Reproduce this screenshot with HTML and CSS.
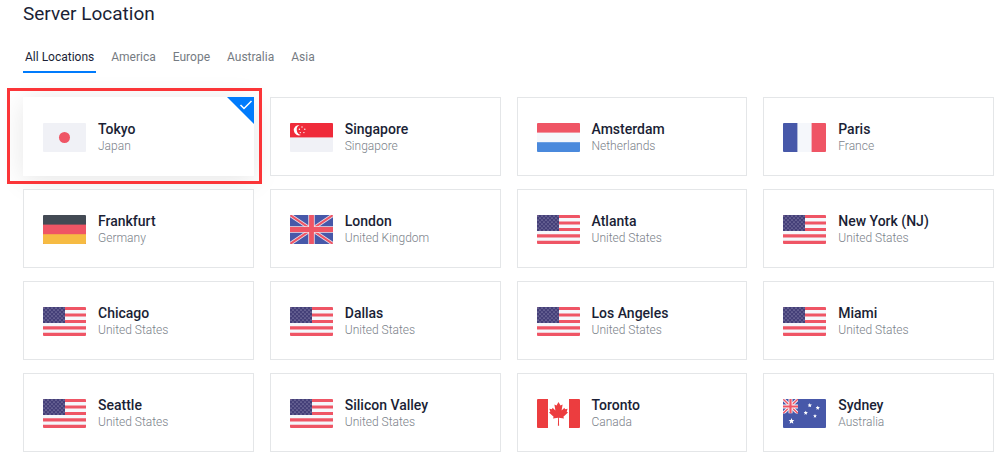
FILE: index.html
```html
<!DOCTYPE html>
<html lang="en">
<head>
<meta charset="UTF-8">
<meta name="viewport" content="width=device-width, initial-scale=1.0">
<link rel="stylesheet" href="styles.css">
<title>Server Location</title>
</head>
<body>
  <!-- Flags -->
  <svg class="sprite" aria-hidden="true">
    <symbol id="jp" viewBox="0 0 43 29">
      <rect width="43" height="29" fill="#f0f1f6"/>
      <circle cx="21.5" cy="14.5" r="5.5" fill="#ef5565"/>
    </symbol>
    <symbol id="sg" viewBox="0 0 43 29">
      <rect width="43" height="29" fill="#f0f1f6"/>
      <rect width="43" height="14.4" fill="#ef2b3a"/>
      <path d="M9.5 2 A5.2 5.2 0 1 0 11 12 A5.4 5.4 0 0 1 9.5 2z" fill="#fff"/>
      <g fill="#fff">
        <circle cx="12" cy="4" r=".7"/>
        <circle cx="9.4" cy="6.3" r=".7"/>
        <circle cx="14.8" cy="6.3" r=".7"/>
        <circle cx="10.3" cy="9.6" r=".7"/>
        <circle cx="13.9" cy="9.6" r=".7"/>
      </g>
    </symbol>
    <symbol id="nl" viewBox="0 0 43 29">
      <rect width="43" height="29" fill="#f5f7fb"/>
      <rect width="43" height="9.6" fill="#ef5565"/>
      <rect y="19.2" width="43" height="9.8" fill="#4a89dc"/>
    </symbol>
    <symbol id="fr" viewBox="0 0 43 29">
      <rect width="43" height="29" fill="#f5f7fb"/>
      <rect width="14.4" height="29" fill="#4758a9"/>
      <rect x="28.6" width="14.4" height="29" fill="#ef5565"/>
    </symbol>
    <symbol id="de" viewBox="0 0 43 29">
      <rect width="43" height="29" fill="#434a54"/>
      <rect y="9.6" width="43" height="19.4" fill="#ef5565"/>
      <rect y="19.2" width="43" height="9.8" fill="#f6bb43"/>
    </symbol>
    <symbol id="gb" viewBox="0 0 43 29">
      <rect width="43" height="29" fill="#4758a9"/>
      <path d="M0 0L43 29M43 0L0 29" stroke="#e6dfea" stroke-width="3.6"/>
      <path d="M0 0L43 29M43 0L0 29" stroke="#ef5565" stroke-width="2"/>
      <path d="M21.5 0V29M0 14.5H43" stroke="#f5dfe6" stroke-width="6.4"/>
      <path d="M21.5 0V29M0 14.5H43" stroke="#ef5565" stroke-width="4.8"/>
    </symbol>
    <pattern id="stars" width="4" height="4" patternUnits="userSpaceOnUse">
      <circle cx="1" cy="1" r=".6" fill="#b9b6d3"/>
      <circle cx="3" cy="3" r=".6" fill="#b9b6d3"/>
    </pattern>
    <symbol id="us" viewBox="0 0 43 29">
      <rect width="43" height="29" fill="#f5f7fb"/>
      <path d="M0 1.5H43M0 8H43M0 14.5H43M0 20.8H43M0 27.3H43" stroke="#ef5565" stroke-width="3.2"/>
      <rect width="22" height="16" fill="#443f78"/>
      <rect width="22" height="16" fill="url(#stars)"/>
    </symbol>
    <symbol id="ca" viewBox="0 0 43 29">
      <rect width="43" height="29" fill="#fff"/>
      <rect width="11" height="29" fill="#ec3d3f"/>
      <rect x="32" width="11" height="29" fill="#ec3d3f"/>
      <path fill="#ec3d3f" d="M21.5 3l-2 3.6-2.1-1 1 6-2.8-2.9-.6 1.5-2.6-.4.9 3-1.3.8 4.6 4.2-.6 1.8 5.1-.8-.2 8h1.2l-.2-8 5.1.8-.6-1.8 4.6-4.2-1.3-.8.9-3-2.6.4-.6-1.5-2.8 2.9 1-6-2.1 1z"/>
    </symbol>
    <symbol id="star" viewBox="0 0 10 10">
      <path fill="#fff" d="M5 0l1.3 3.4 3.6.2-2.8 2.3 1 3.6L5 7.5 1.9 9.5l1-3.6L.1 3.6l3.6-.2z"/>
    </symbol>
    <symbol id="au" viewBox="0 0 43 29">
      <rect width="43" height="29" fill="#4758a9"/>
      <svg width="15" height="14.5">
        <path d="M0 0L15 14.5M15 0L0 14.5" stroke="#f5f7fb" stroke-width="3.2"/>
        <path d="M0 0L15 14.5M15 0L0 14.5" stroke="#ef5565" stroke-width="1.4"/>
        <path d="M7.5 0V14.5M0 7.5H15" stroke="#f5f7fb" stroke-width="4"/>
        <path d="M7.5 0V14.5M0 7.5H15" stroke="#ef5565" stroke-width="2.2"/>
      </svg>
      <use href="#star" x="5.5" y="19" width="6" height="6"/>
      <use href="#star" x="24.5" y="4" width="4.5" height="4.5"/>
      <use href="#star" x="32.5" y="6.5" width="4.5" height="4.5"/>
      <use href="#star" x="20.5" y="11.5" width="4.5" height="4.5"/>
      <use href="#star" x="30" y="15" width="4" height="4"/>
    </symbol>
  </svg>

  <main class="wrapper">
    <h1>Server Location</h1>

    <nav class="tabs">
      <a href="#all" class="active">All Locations</a>
      <a href="#america">America</a>
      <a href="#europe">Europe</a>
      <a href="#australia">Australia</a>
      <a href="#asia">Asia</a>
    </nav>

    <div class="locations">
      <label class="card">
        <input type="radio" name="location" value="tokyo" checked>
        <svg class="flag"><use href="#jp"/></svg>
        <span class="info"><span class="city">Tokyo</span><span class="country">Japan</span></span>
        <svg class="corner" viewBox="0 0 27 27">
          <path d="M0 0H27V27z" fill="#007bfc"/>
          <path d="M13.5 8l3.5 3.5L24.5 4" fill="none" stroke="#fff" stroke-width="1.5"/>
        </svg>
        <span class="frame"></span>
      </label>
      <label class="card">
        <input type="radio" name="location" value="singapore">
        <svg class="flag"><use href="#sg"/></svg>
        <span class="info"><span class="city">Singapore</span><span class="country">Singapore</span></span>
      </label>
      <label class="card">
        <input type="radio" name="location" value="amsterdam">
        <svg class="flag"><use href="#nl"/></svg>
        <span class="info"><span class="city">Amsterdam</span><span class="country">Netherlands</span></span>
      </label>
      <label class="card">
        <input type="radio" name="location" value="paris">
        <svg class="flag"><use href="#fr"/></svg>
        <span class="info"><span class="city">Paris</span><span class="country">France</span></span>
      </label>
      <label class="card">
        <input type="radio" name="location" value="frankfurt">
        <svg class="flag"><use href="#de"/></svg>
        <span class="info"><span class="city">Frankfurt</span><span class="country">Germany</span></span>
      </label>
      <label class="card">
        <input type="radio" name="location" value="london">
        <svg class="flag"><use href="#gb"/></svg>
        <span class="info"><span class="city">London</span><span class="country">United Kingdom</span></span>
      </label>
      <label class="card">
        <input type="radio" name="location" value="atlanta">
        <svg class="flag"><use href="#us"/></svg>
        <span class="info"><span class="city">Atlanta</span><span class="country">United States</span></span>
      </label>
      <label class="card">
        <input type="radio" name="location" value="newyork">
        <svg class="flag"><use href="#us"/></svg>
        <span class="info"><span class="city">New York (NJ)</span><span class="country">United States</span></span>
      </label>
      <label class="card">
        <input type="radio" name="location" value="chicago">
        <svg class="flag"><use href="#us"/></svg>
        <span class="info"><span class="city">Chicago</span><span class="country">United States</span></span>
      </label>
      <label class="card">
        <input type="radio" name="location" value="dallas">
        <svg class="flag"><use href="#us"/></svg>
        <span class="info"><span class="city">Dallas</span><span class="country">United States</span></span>
      </label>
      <label class="card">
        <input type="radio" name="location" value="losangeles">
        <svg class="flag"><use href="#us"/></svg>
        <span class="info"><span class="city">Los Angeles</span><span class="country">United States</span></span>
      </label>
      <label class="card">
        <input type="radio" name="location" value="miami">
        <svg class="flag"><use href="#us"/></svg>
        <span class="info"><span class="city">Miami</span><span class="country">United States</span></span>
      </label>
      <label class="card">
        <input type="radio" name="location" value="seattle">
        <svg class="flag"><use href="#us"/></svg>
        <span class="info"><span class="city">Seattle</span><span class="country">United States</span></span>
      </label>
      <label class="card">
        <input type="radio" name="location" value="siliconvalley">
        <svg class="flag"><use href="#us"/></svg>
        <span class="info"><span class="city">Silicon Valley</span><span class="country">United States</span></span>
      </label>
      <label class="card">
        <input type="radio" name="location" value="toronto">
        <svg class="flag"><use href="#ca"/></svg>
        <span class="info"><span class="city">Toronto</span><span class="country">Canada</span></span>
      </label>
      <label class="card">
        <input type="radio" name="location" value="sydney">
        <svg class="flag"><use href="#au"/></svg>
        <span class="info"><span class="city">Sydney</span><span class="country">Australia</span></span>
      </label>
    </div>
  </main>
</body>
</html>
```
FILE: styles.css
```css
* {
  margin: 0;
  padding: 0;
  box-sizing: border-box;
}

body {
  background-color: #fff;
  color: #1b1f36;
  font-family: Roboto, "Liberation Sans", sans-serif;
}

.sprite {
  position: absolute;
  width: 0;
  height: 0;
}

.wrapper {
  padding: 2px 12px 8px 23px;
}

h1 {
  font-size: 19px;
  font-weight: 400;
  line-height: 24px;
}

/* Region tabs */
.tabs {
  display: flex;
  gap: 13px;
  margin-top: 21px;
}

.tabs a {
  padding: 0 2px 4px;
  border-bottom: 2px solid transparent;
  color: #757b82;
  font-size: 12px;
  line-height: 20px;
  text-decoration: none;
}

.tabs a.active {
  border-bottom-color: #007bfc;
  color: #1b1f36;
}

/* Location cards */
.locations {
  display: grid;
  grid-template-columns: repeat(4, 1fr);
  gap: 13px 16px;
  margin-top: 24px;
}

.card {
  position: relative;
  display: flex;
  align-items: center;
  gap: 12px;
  min-height: 79px;
  padding: 0 19px;
  border: 1px solid #e4e6e8;
  background-color: #fff;
  cursor: pointer;
}

.card input {
  position: absolute;
  opacity: 0;
}

.card:has(input:checked) {
  border-color: #fff;
  box-shadow: 0 4px 28px rgba(0, 0, 0, 0.1);
}

.flag {
  width: 43px;
  height: 29px;
  margin-top: 2px;
  border-radius: 1px;
}

.info {
  display: flex;
  flex-direction: column;
}

.city {
  font-size: 14px;
  font-weight: 500;
  line-height: 18px;
}

.country {
  color: #7b828a;
  font-size: 12px;
  font-weight: 300;
  line-height: 16px;
}

.corner {
  position: absolute;
  top: -1px;
  right: -1px;
  width: 27px;
  height: 27px;
}

/* red frame round the chosen server */
.frame {
  position: absolute;
  top: -10px;
  right: -9px;
  bottom: -9px;
  left: -17px;
  border: 3px solid #fb3538;
  z-index: 1;
}

@media screen and (max-width: 720px) {
  .locations {
    grid-template-columns: repeat(2, 1fr);
  }
}
```
